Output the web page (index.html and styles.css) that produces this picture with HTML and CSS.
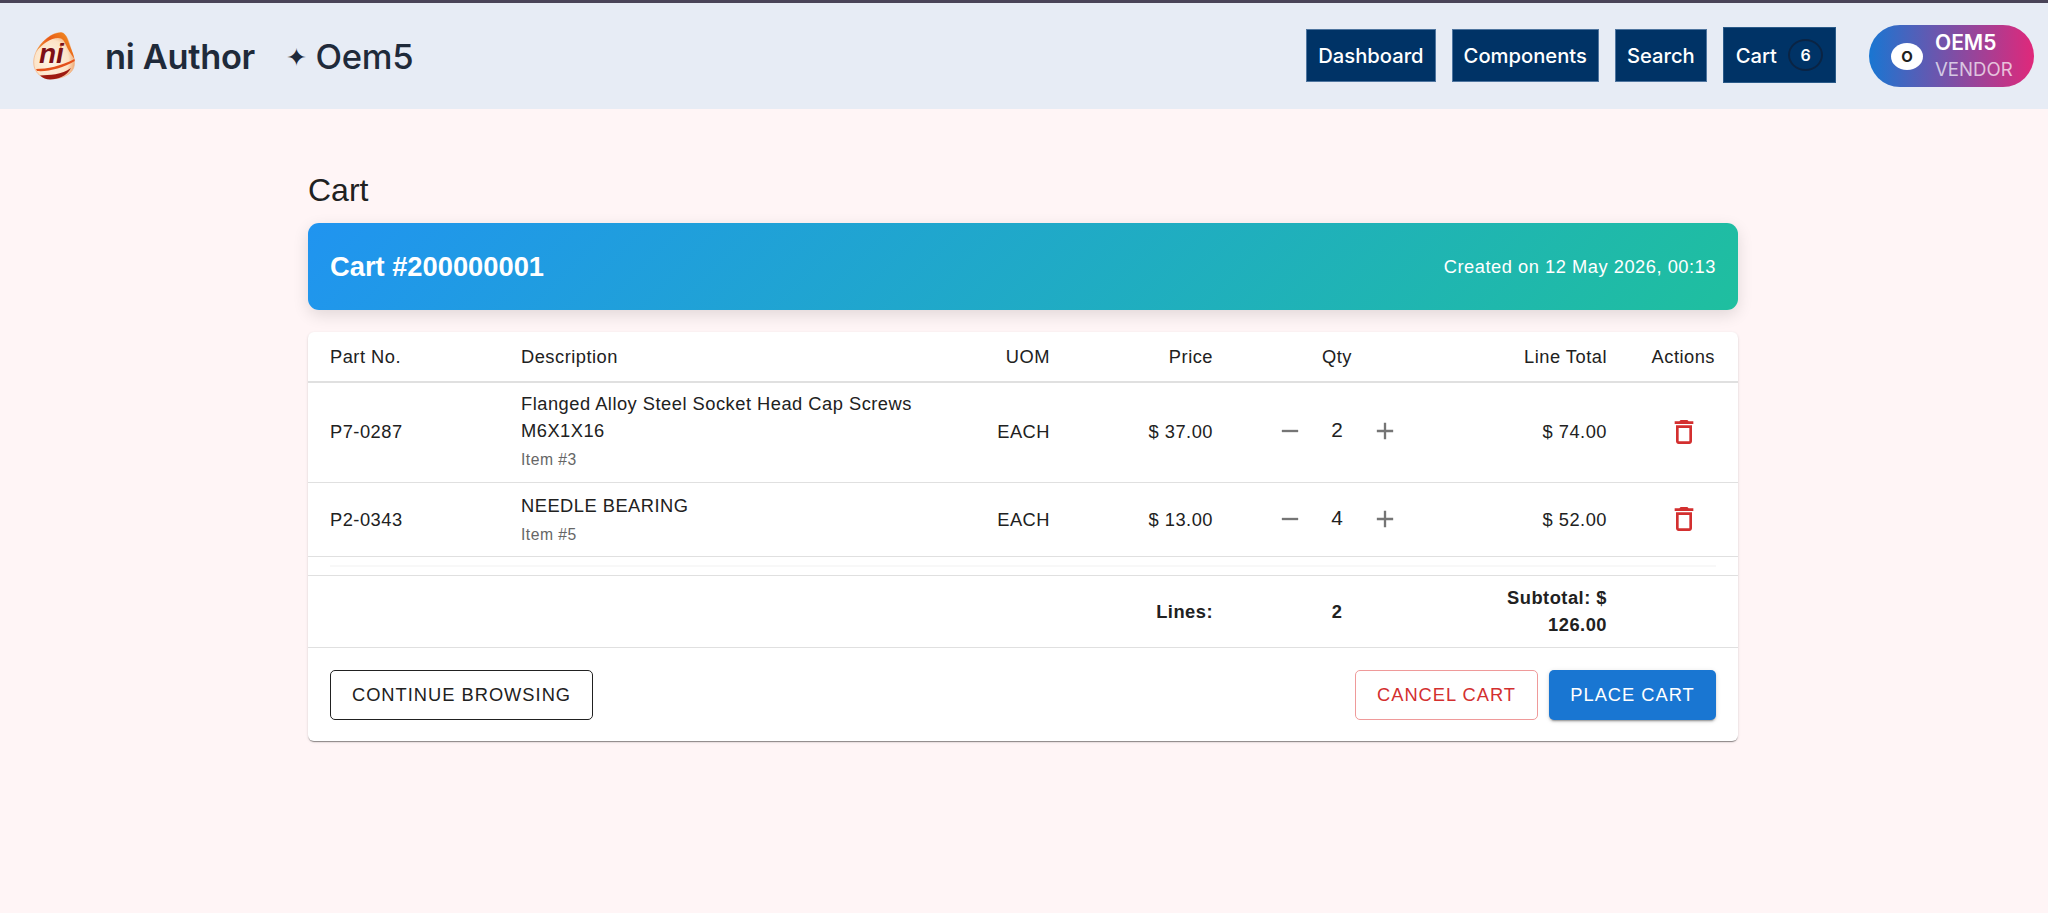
FILE: index.html
```html
<!DOCTYPE html>
<html lang="en">
<head>
<meta charset="utf-8">
<title>Cart</title>
<link rel="stylesheet" href="styles.css">
</head>
<body>
<header class="topbar">
  <div class="brand">
    <svg class="logo" viewBox="0 0 42 48" aria-hidden="true">
      <defs>
        <radialGradient id="egg" cx="0.42" cy="0.6" r="0.62">
          <stop offset="0" stop-color="#fff6e8"/>
          <stop offset="0.7" stop-color="#fce3c6"/>
          <stop offset="1" stop-color="#ee9f66"/>
        </radialGradient>
        <linearGradient id="rim" x1="0" y1="0.5" x2="0.8" y2="0">
          <stop offset="0" stop-color="#ee8f3c"/>
          <stop offset="0.45" stop-color="#e85a18"/>
          <stop offset="1" stop-color="#f08a20"/>
        </linearGradient>
      </defs>
      <path d="M28 0.500C19 0.500 8 9 3 20C-1 29 0 38 7 43.500C14 48.500 29 48 37 41C42 36.500 42.500 30 40 24C37 15 35 1 28 0.500Z" fill="url(#egg)" stroke="#f0b184" stroke-width="0.700"/>
      <path d="M28 0.500C19 0.500 8 9 3 20C9 12 18 6 25 6C30 6 31 9 33 13C35 18 38 22 41.500 27C40 20 37 15 35.500 10C34 5 31.500 0.500 28 0.500Z" fill="url(#rim)"/>
      <path d="M3 37C14 37 28 34 41.500 27L41.800 29C30 36 15 40 4 39Z" fill="#e4501a"/>
      <path d="M7 43.500C16 43 29 43 38 36C34 44 25 47.500 17 47.500C13 47.500 10 46 7 43.500Z" fill="#9e1a10"/>
      <path d="M28 14L27 30" fill="none" stroke="#ee6a1c" stroke-width="1"/>
      <text class="logo-text" x="6" y="31">ni</text>
    </svg>
    <span class="brand-name">ni Author</span>
    <span class="brand-tenant"><span class="star">✦</span> Oem5</span>
  </div>
  <nav class="nav">
    <a class="nav-btn">Dashboard</a>
    <a class="nav-btn">Components</a>
    <a class="nav-btn">Search</a>
    <a class="nav-btn nav-cart">Cart <span class="badge">6</span></a>
  </nav>
  <div class="user-pill">
    <span class="avatar">O</span>
    <span class="user-text"><span class="user-name">OEM5</span><span class="user-role">VENDOR</span></span>
  </div>
</header>

<main class="content">
  <h1 class="title">Cart</h1>
  <section class="banner">
    <span class="banner-id">Cart #200000001</span>
    <span class="banner-date">Created on 12 May 2026, 00:13</span>
  </section>

  <section class="card">
    <table class="cart-table">
      <colgroup>
        <col class="c-part"><col class="c-desc"><col class="c-uom"><col class="c-price"><col class="c-qty"><col class="c-total"><col class="c-act">
      </colgroup>
      <thead>
        <tr>
          <th>Part No.</th>
          <th>Description</th>
          <th class="r">UOM</th>
          <th class="r">Price</th>
          <th class="c">Qty</th>
          <th class="r">Line Total</th>
          <th class="r th-act">Actions</th>
        </tr>
      </thead>
      <tbody>
        <tr class="row-a">
          <td>P7-0287</td>
          <td><div>Flanged Alloy Steel Socket Head Cap Screws M6X1X16</div><div class="item">Item #3</div></td>
          <td class="r">EACH</td>
          <td class="r">$ 37.00</td>
          <td>
            <div class="qty">
              <svg class="qty-icon" viewBox="0 0 24 24"><path d="M19 13H5v-2h14z"/></svg>
              <span class="qty-num">2</span>
              <svg class="qty-icon" viewBox="0 0 24 24"><path d="M19 13h-6v6h-2v-6H5v-2h6V5h2v6h6z"/></svg>
            </div>
          </td>
          <td class="r">$ 74.00</td>
          <td class="del"><svg class="trash" viewBox="0 0 24 24"><path d="M6 19c0 1.100.9 2 2 2h8c1.100 0 2-.9 2-2V7H6zM8 9h8v10H8zm7.500-5-1-1h-5l-1 1H5v2h14V4z"/></svg></td>
        </tr>
        <tr class="row-b">
          <td>P2-0343</td>
          <td><div>NEEDLE BEARING</div><div class="item">Item #5</div></td>
          <td class="r">EACH</td>
          <td class="r">$ 13.00</td>
          <td>
            <div class="qty">
              <svg class="qty-icon" viewBox="0 0 24 24"><path d="M19 13H5v-2h14z"/></svg>
              <span class="qty-num">4</span>
              <svg class="qty-icon" viewBox="0 0 24 24"><path d="M19 13h-6v6h-2v-6H5v-2h6V5h2v6h6z"/></svg>
            </div>
          </td>
          <td class="r">$ 52.00</td>
          <td class="del"><svg class="trash" viewBox="0 0 24 24"><path d="M6 19c0 1.100.9 2 2 2h8c1.100 0 2-.9 2-2V7H6zM8 9h8v10H8zm7.500-5-1-1h-5l-1 1H5v2h14V4z"/></svg></td>
        </tr>
        <tr class="row-gap">
          <td colspan="7"><div class="gap-line"></div></td>
        </tr>
        <tr class="row-sum">
          <td></td>
          <td></td>
          <td></td>
          <td class="r">Lines:</td>
          <td class="c">2</td>
          <td class="r">Subtotal: $ 126.00</td>
          <td></td>
        </tr>
      </tbody>
    </table>
    <div class="actions">
      <button class="btn btn-outline">CONTINUE BROWSING</button>
      <div class="actions-right">
        <button class="btn btn-cancel">CANCEL CART</button>
        <button class="btn btn-primary">PLACE CART</button>
      </div>
    </div>
  </section>
</main>
</body>
</html>
```

FILE: styles.css
```css
* { box-sizing: border-box; }
html, body { margin: 0; height: 100%; }
body {
  background: #fff5f6;
  font-family: "Liberation Sans", Arial, sans-serif;
  color: #212121;
  overflow: hidden;
}
.topbar {
  display: flex;
  align-items: center;
  height: 109px;
  padding: 0 14px 0 33px;
  background: #e7ecf5;
  border-top: 3px solid #4a4458;
  font-family: Inter, sans-serif;
}
.brand { display: flex; align-items: center; color: #1f2a3a; }
.logo { width: 42px; height: 48px; display: block; }
.logo-text {
  font-family: "Liberation Sans", sans-serif;
  font-weight: 700;
  font-style: italic;
  font-size: 28px;
  fill: #7d0f16;
}
.brand-name { margin-left: 30px; font-size: 34.400px; font-weight: 600; letter-spacing: -0.3px; }
.brand-tenant { margin-left: 31px; font-size: 34.600px; font-weight: 500; letter-spacing: -0.3px; }
.star { font-size: 25px; vertical-align: 3px; font-family: "DejaVu Sans", sans-serif; }
.nav { display: flex; align-items: center; gap: 16px; margin-left: auto; padding-bottom: 2px; }
.nav-btn {
  display: flex;
  align-items: center;
  justify-content: center;
  height: 53px;
  padding: 0 11px;
  background: #003366;
  border: 1px solid #4f759f;
  color: #fff;
  font-size: 20.200px;
  font-weight: 500;
}
.nav-cart {
  height: 56px;
  gap: 11px;
  padding: 0 12px 0 12px;
  border: 1px solid #2a5a88;
  justify-content: flex-start;
}
.badge {
  display: flex;
  align-items: center;
  justify-content: center;
  width: 35px;
  height: 32px;
  border-radius: 50%;
  background: #003366;
  border: 2px solid #0a2444;
  font-size: 16px;
  font-weight: 600;
}
.user-pill {
  display: flex;
  align-items: center;
  width: 165px;
  height: 62px;
  margin-left: 33px;
  padding-left: 22px;
  border-radius: 31px;
  background: linear-gradient(90deg, #1976d2, #e0287a);
}
.avatar {
  display: flex;
  align-items: center;
  justify-content: center;
  width: 32px;
  height: 27px;
  border-radius: 50%;
  background: #fff;
  color: #212121;
  font-size: 15px;
  font-weight: 700;
}
.user-text { display: flex; flex-direction: column; margin-left: 12px; line-height: 26px; }
.user-name { color: #fff; font-size: 21px; font-weight: 600; }
.user-role { color: rgba(255,255,255,0.7); font-size: 18.600px; font-weight: 400; }

.content { width: 1430px; margin-left: 308px; }
.title { margin: 56px 0 0; height: 58px; font-size: 32px; font-weight: 400; line-height: 51px; color: #212121; }
.banner {
  display: flex;
  align-items: center;
  justify-content: space-between;
  height: 87px;
  padding: 0 22px;
  border-radius: 11px;
  background: linear-gradient(135deg, #2094f0, #1fbf9f);
  box-shadow: 0 5px 16px rgba(0,0,0,0.12);
  color: #fff;
}
.banner-id { font-size: 27.300px; font-weight: 700; }
.banner-date { font-size: 18.300px; letter-spacing: 0.520px; }

.card {
  margin-top: 22px;
  background: #fff;
  border-radius: 6px;
  box-shadow: 0 2px 1px -1px rgba(0,0,0,0.3), 0 1px 1px rgba(0,0,0,0.14), 0 1px 3px rgba(0,0,0,0.12);
}
.cart-table {
  width: 100%;
  border-collapse: collapse;
  table-layout: fixed;
  font-size: 18.300px;
  letter-spacing: 0.500px;
  color: #212121;
}
.c-part { width: 191px; }
.c-desc { width: 461px; }
.c-uom { width: 112px; }
.c-price { width: 163px; }
.c-qty { width: 204px; }
.c-total { width: 190px; }
.c-act { width: 109px; }
th, td { padding: 0 22px; text-align: left; font-weight: 400; line-height: 27px; border-bottom: 1px solid #e0e0e0; }
th { height: 50px; border-bottom-width: 2px; }
.r { text-align: right; }
.c { text-align: center; }
th.th-act { padding: 0 23px 0 0; }
.row-a td { height: 100px; padding-bottom: 2px; }
.row-b td { height: 74px; }
.item { margin-top: 4px; font-size: 15.700px; line-height: 24px; color: #666; }
.qty { display: flex; align-items: center; justify-content: center; gap: 0; margin: 0 -22px; }
.qty-icon { width: 28px; height: 28px; fill: rgba(0,0,0,0.54); flex: none; }
.qty-num { width: 67px; text-align: center; font-size: 20.800px; letter-spacing: 0; position: relative; top: -2px; }
td.del { text-align: center; padding: 0; }
.trash { display: block; width: 32px; height: 32px; fill: #d32f2f; margin: 0 auto 0 39px; }
.row-gap td { height: 19px; padding: 0 22px; line-height: 0; }
.gap-line { height: 2px; background: #f8f8f8; }
.row-sum td { height: 72px; font-weight: 700; }
.actions { display: flex; justify-content: space-between; align-items: center; padding: 22px 22px 21px; }
.actions-right { display: flex; gap: 11px; }
.btn {
  height: 50px;
  padding: 0 12px;
  border-radius: 5px;
  font-family: "Liberation Sans", Arial, sans-serif;
  font-size: 18.300px;
  letter-spacing: 1px;
  background: #fff;
}
.btn-outline { width: 263px; border: 1px solid #212121; color: #212121; }
.btn-cancel { width: 183px; border: 1px solid #ef9a9a; color: #d32f2f; }
.btn-primary {
  width: 167px;
  border: none;
  background: #1976d2;
  color: #fff;
  box-shadow: 0 3px 1px -2px rgba(0,0,0,0.2), 0 2px 2px rgba(0,0,0,0.14), 0 1px 5px rgba(0,0,0,0.12);
}
```
